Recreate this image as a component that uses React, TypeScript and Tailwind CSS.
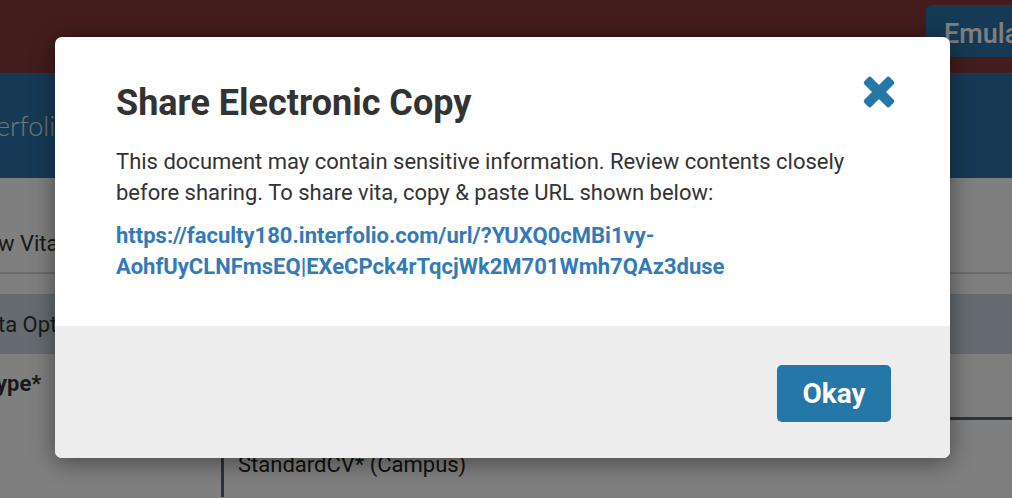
function BackgroundPage() {
  return (
    <div className="w-[1012px] h-[498px] overflow-hidden bg-white font-['Roboto',sans-serif]">
      {/* top bar */}
      <div className="h-[73px] bg-[#883838] flex justify-end pt-[5px]">
        <div className="w-[86px] h-[52px] bg-[#2c74aa] rounded-tl-md pl-[18px] pt-[9px] text-[27px] font-medium text-white overflow-hidden whitespace-nowrap">
          Emulate
        </div>
      </div>
      {/* brand band */}
      <div className="h-[105px] bg-[#2c74aa] flex items-center -ml-[4px] pt-[2px] overflow-hidden whitespace-nowrap">
        <span className="text-[27px] font-light text-[#e0ecf5] font-['Lato',sans-serif]">erfolio</span>
      </div>
      <div className="h-[44px]" />
      <div className="h-[42px] flex items-center -ml-[2px] text-[22px] text-[#333] whitespace-nowrap">w Vita</div>
      <div className="h-[10px] border-b-2 border-[#d8d8d8]" />
      <div className="h-[20px]" />
      <div className="h-[60px] bg-[#cad6e0] flex items-center -ml-[2px] text-[22px] text-[#333] whitespace-nowrap">ta Opt</div>
      <div className="h-[63px] pt-[13px] -ml-[4px] text-[22px] font-bold text-[#333] whitespace-nowrap">ype*</div>
      <div className="ml-[221px] border-l-[3px] border-t-[3px] border-[#56687a] h-[80px] pl-[14px] pt-[28px] text-[22px] text-[#222] whitespace-nowrap">
        StandardCV* (Campus)
      </div>
    </div>
  );
}

function CloseIcon() {
  return (
    <svg width="34" height="34" viewBox="0 0 34 34" fill="#2577a7">
      <rect x="-1" y="12" width="36" height="10" rx="2.5" transform="rotate(45 17 17)" />
      <rect x="-1" y="12" width="36" height="10" rx="2.5" transform="rotate(-45 17 17)" />
    </svg>
  );
}

export default function App() {
  return (
    <div className="relative w-[1012px] h-[498px] overflow-hidden">
      <BackgroundPage />
      <div className="absolute inset-0 bg-black/50" />
      <div className="absolute left-[55px] top-[37px] w-[895px] h-[421px] rounded-[7px] overflow-hidden bg-white shadow-[0_4px_24px_rgba(0,0,0,0.45)] font-['Roboto',sans-serif] flex flex-col">
        <div className="h-[289px] pl-[61px] pr-[54px] pt-[45px]">
          <div className="flex items-start justify-between">
            <h2 className="text-[36px] leading-[42px] font-bold text-[#333]">Share Electronic Copy</h2>
            <button className="mt-[-7px]">
              <CloseIcon />
            </button>
          </div>
          <p className="mt-[22px] text-[22px] leading-[31px] text-[#333]">
            This document may contain sensitive information. Review contents closely
            <br />
            before sharing. To share vita, copy &amp; paste URL shown below:
          </p>
          <a className="block mt-[12px] text-[22px] leading-[31px] font-bold text-[#337ab7]">
            https://faculty180.interfolio.com/url/?YUXQ0cMBi1vy-
            <br />
            AohfUyCLNFmsEQ|EXeCPck4rTqcjWk2M701Wmh7QAz3duse
          </a>
        </div>
        <div className="flex-1 bg-[#ededed] flex justify-end items-start pt-[39px] pr-[59px]">
          <button className="w-[114px] h-[57px] rounded-[5px] bg-[#2577a7] text-white text-[28px] font-bold">
            Okay
          </button>
        </div>
      </div>
    </div>
  );
}
